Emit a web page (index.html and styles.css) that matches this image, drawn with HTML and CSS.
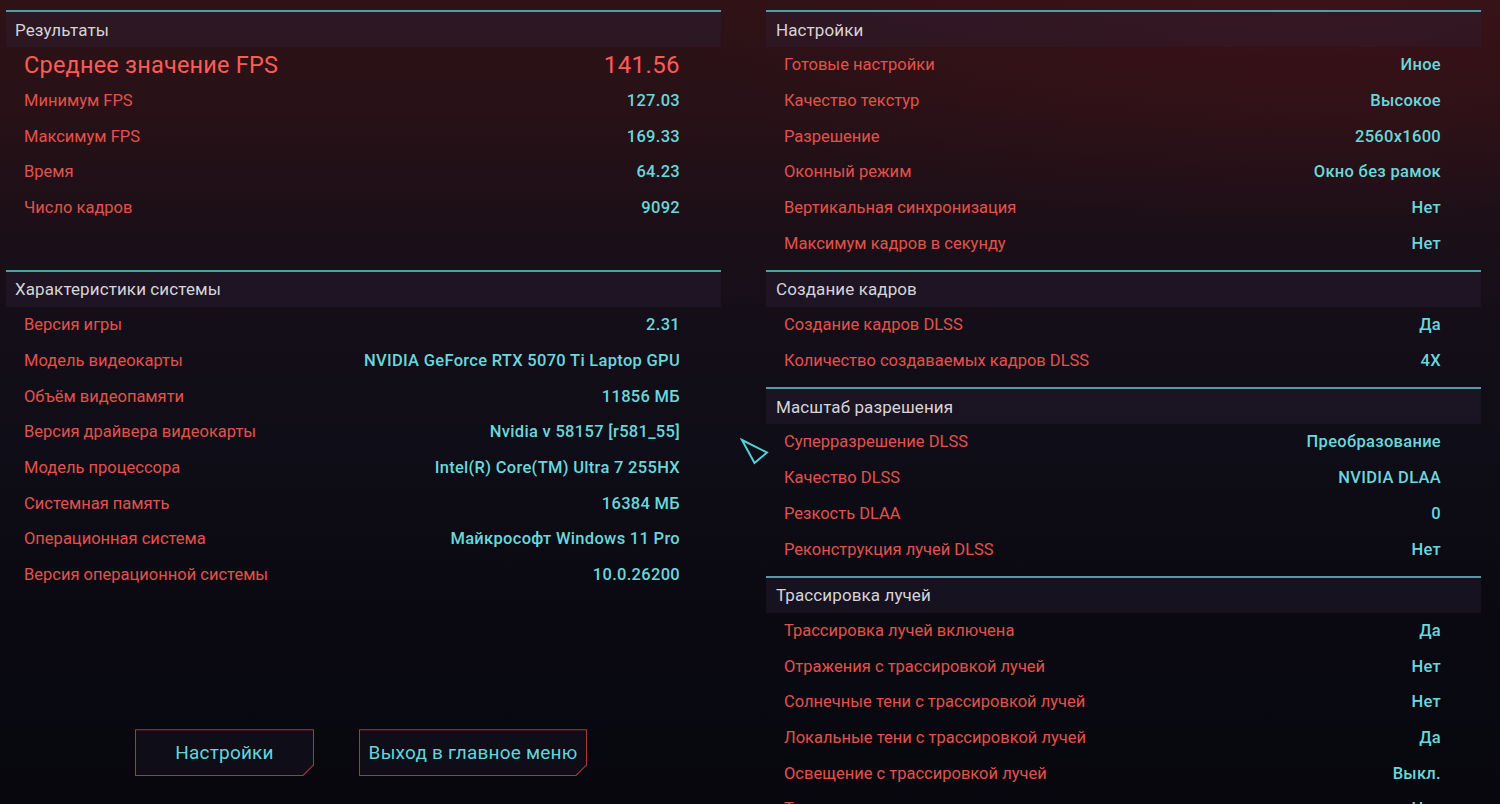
FILE: index.html
```html
<!DOCTYPE html>
<html lang="ru">
<head>
<meta charset="utf-8">
<title>Результаты теста</title>
<link rel="stylesheet" href="styles.css">
</head>
<body>
<div class="screen">
  <div class="col col-left">
    <section class="sec">
      <div class="sec-head">Результаты</div>
      <div class="rows rows-fill">
        <div class="row row-big"><span class="lbl">Среднее значение FPS</span><span class="val">141.56</span></div>
        <div class="row"><span class="lbl">Минимум FPS</span><span class="val">127.03</span></div>
        <div class="row"><span class="lbl">Максимум FPS</span><span class="val">169.33</span></div>
        <div class="row"><span class="lbl">Время</span><span class="val">64.23</span></div>
        <div class="row"><span class="lbl">Число кадров</span><span class="val">9092</span></div>
      </div>
    </section>
    <section class="sec">
      <div class="sec-head">Характеристики системы</div>
      <div class="rows">
        <div class="row"><span class="lbl">Версия игры</span><span class="val">2.31</span></div>
        <div class="row"><span class="lbl">Модель видеокарты</span><span class="val">NVIDIA GeForce RTX 5070 Ti Laptop GPU</span></div>
        <div class="row"><span class="lbl">Объём видеопамяти</span><span class="val">11856 МБ</span></div>
        <div class="row"><span class="lbl">Версия драйвера видеокарты</span><span class="val">Nvidia v 58157 [r581_55]</span></div>
        <div class="row"><span class="lbl">Модель процессора</span><span class="val">Intel(R) Core(TM) Ultra 7 255HX</span></div>
        <div class="row"><span class="lbl">Системная память</span><span class="val">16384 МБ</span></div>
        <div class="row"><span class="lbl">Операционная система</span><span class="val">Майкрософт Windows 11 Pro</span></div>
        <div class="row"><span class="lbl">Версия операционной системы</span><span class="val">10.0.26200</span></div>
      </div>
    </section>
    <div class="buttons">
      <div class="btn btn-settings"><div class="btn-inner">Настройки</div></div>
      <div class="btn btn-exit"><div class="btn-inner">Выход в главное меню</div></div>
    </div>
  </div>

  <div class="col col-right">
    <section class="sec">
      <div class="sec-head">Настройки</div>
      <div class="rows">
        <div class="row"><span class="lbl">Готовые настройки</span><span class="val">Иное</span></div>
        <div class="row"><span class="lbl">Качество текстур</span><span class="val">Высокое</span></div>
        <div class="row"><span class="lbl">Разрешение</span><span class="val">2560x1600</span></div>
        <div class="row"><span class="lbl">Оконный режим</span><span class="val">Окно без рамок</span></div>
        <div class="row"><span class="lbl">Вертикальная синхронизация</span><span class="val">Нет</span></div>
        <div class="row"><span class="lbl">Максимум кадров в секунду</span><span class="val">Нет</span></div>
      </div>
    </section>
    <section class="sec">
      <div class="sec-head">Создание кадров</div>
      <div class="rows">
        <div class="row"><span class="lbl">Создание кадров DLSS</span><span class="val">Да</span></div>
        <div class="row"><span class="lbl">Количество создаваемых кадров DLSS</span><span class="val">4X</span></div>
      </div>
    </section>
    <section class="sec">
      <div class="sec-head">Масштаб разрешения</div>
      <div class="rows">
        <div class="row"><span class="lbl">Суперразрешение DLSS</span><span class="val">Преобразование</span></div>
        <div class="row"><span class="lbl">Качество DLSS</span><span class="val">NVIDIA DLAA</span></div>
        <div class="row"><span class="lbl">Резкость DLAA</span><span class="val">0</span></div>
        <div class="row"><span class="lbl">Реконструкция лучей DLSS</span><span class="val">Нет</span></div>
      </div>
    </section>
    <section class="sec">
      <div class="sec-head">Трассировка лучей</div>
      <div class="rows">
        <div class="row"><span class="lbl">Трассировка лучей включена</span><span class="val">Да</span></div>
        <div class="row"><span class="lbl">Отражения с трассировкой лучей</span><span class="val">Нет</span></div>
        <div class="row"><span class="lbl">Солнечные тени с трассировкой лучей</span><span class="val">Нет</span></div>
        <div class="row"><span class="lbl">Локальные тени с трассировкой лучей</span><span class="val">Да</span></div>
        <div class="row"><span class="lbl">Освещение с трассировкой лучей</span><span class="val">Выкл.</span></div>
        <div class="row"><span class="lbl">Трассировка пути</span><span class="val">Нет</span></div>
      </div>
    </section>
  </div>

  <svg class="cursor" width="30" height="30" viewBox="0 0 30 30">
    <polygon points="2,2 27,14.5 14.5,25" fill="none" stroke="#4fd2d8" stroke-width="2" stroke-linejoin="miter"/>
  </svg>
</div>
</body>
</html>
```

FILE: styles.css
```css
* { box-sizing: border-box; }

html, body {
  margin: 0;
  padding: 0;
  width: 1500px;
  height: 804px;
  overflow: hidden;
  background: #07070d;
}

.screen {
  position: relative;
  width: 1500px;
  height: 804px;
  overflow: hidden;
  padding: 10px 19px 0 6px;
  display: grid;
  grid-template-columns: 715px 715px;
  column-gap: 45px;
  align-items: start;
  font-family: Roboto, "Noto Sans", sans-serif;
  background:
    radial-gradient(ellipse 900px 320px at 1300px 0px, rgba(80, 18, 24, 0.4), rgba(80, 18, 24, 0) 70%),
    linear-gradient(180deg, #2e1216 0%, #271117 14%, #1d0f17 27%, #140e19 40%, #0f0d17 55%, #0b0a13 72%, #07070d 100%);
}

.col {
  display: flex;
  flex-direction: column;
}

.sec {
  border-top: 2px solid #4e9ea6;
  margin-bottom: 8.8px;
}

.sec-head {
  height: 35px;
  display: flex;
  align-items: center;
  padding-left: 9px;
  font-size: 17px;
  color: #d6d4d8;
  background: rgba(44, 34, 56, 0.36);
  letter-spacing: 0.1px;
}

.col-right .sec-head { padding-left: 10px; }

.rows {
  display: flex;
  flex-direction: column;
}

.rows-fill { min-height: 214.2px; }

.row {
  height: 35.7px;
  display: flex;
  align-items: center;
  justify-content: space-between;
  padding: 0 41px 0 18px;
  font-size: 16.5px;
}

.col-right .row { padding-right: 40px; }

.lbl { color: #e2524b; }

.val {
  color: #68d8dc;
  font-weight: 500;
  letter-spacing: 0.3px;
}

.row-big .lbl {
  font-size: 23.5px;
  color: #ff5b55;
  font-weight: 400;
  letter-spacing: 0.2px;
}

.row-big .val {
  font-size: 24px;
  color: #ff5b55;
  font-weight: 400;
  letter-spacing: 0.4px;
}

.buttons {
  display: flex;
  justify-content: center;
  gap: 45px;
  margin-top: 128px;
  padding-right: 5px;
}

.btn {
  height: 47px;
  padding: 1px;
  background: #a8383b;
  clip-path: polygon(0 0, 100% 0, 100% calc(100% - 11px), calc(100% - 11px) 100%, 0 100%);
}

.btn-settings { width: 179px; }
.btn-exit { width: 228px; }

.btn-inner {
  height: 100%;
  display: flex;
  align-items: center;
  justify-content: center;
  background: #0e0d18;
  color: #62d6dc;
  font-size: 19px;
  letter-spacing: 0.2px;
  clip-path: polygon(0 0, 100% 0, 100% calc(100% - 10.6px), calc(100% - 10.6px) 100%, 0 100%);
}

.cursor {
  position: absolute;
  left: 740px;
  top: 438px;
}
```
